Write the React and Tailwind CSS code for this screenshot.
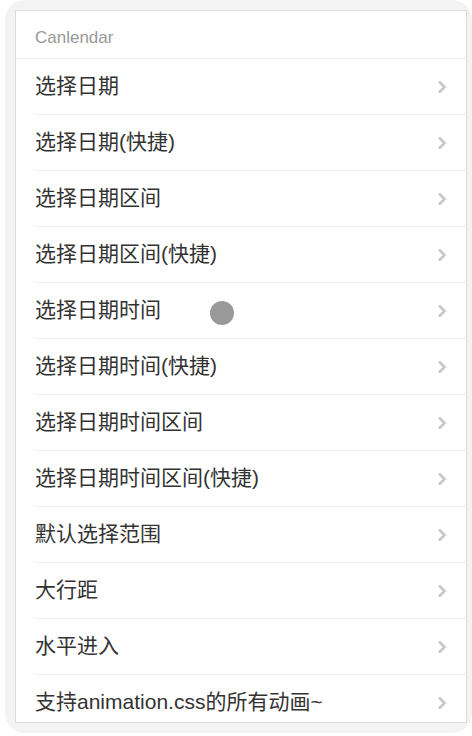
import React from "react";

const items = [
  "选择日期",
  "选择日期(快捷)",
  "选择日期区间",
  "选择日期区间(快捷)",
  "选择日期时间",
  "选择日期时间(快捷)",
  "选择日期时间区间",
  "选择日期时间区间(快捷)",
  "默认选择范围",
  "大行距",
  "水平进入",
  "支持animation.css的所有动画~",
];

function Chevron() {
  return (
    <svg width="10" height="14" viewBox="0 0 10 14" className="shrink-0">
      <path d="M2 1.5 L7.5 7 L2 12.5" fill="none" stroke="#c7c7c7" strokeWidth="2.6" />
    </svg>
  );
}

export default function App() {
  return (
    <div
      className="w-[472px] h-[736px] bg-white overflow-hidden relative"
      style={{ fontFamily: '"Liberation Sans", "Noto Sans CJK SC", Arial, sans-serif' }}
    >
      <div className="ml-[5px] w-[467px] h-[733px] bg-[#f3f3f3] rounded-[20px] pt-[10px] pl-[10px]">
        <div className="w-[452px] h-[713px] bg-white border border-[#dcdcdc] overflow-hidden">
          <div className="h-[48px] flex items-center pl-[19px] border-b border-[#eeeeee] text-[17px] text-[#999999] pt-[7px]">
            Canlendar
          </div>
          {items.map((t, i) => (
            <div key={i} className="pl-[19px]">
              <div className="h-[56px] flex items-center justify-between pr-[19px] border-b border-[#eeeeee] text-[21px] text-[#333333]">
                <span className="leading-[24px] -mt-[2px]">{t}</span>
                <Chevron />
              </div>
            </div>
          ))}
        </div>
      </div>
      <div className="absolute left-[210px] top-[301px] w-[24px] h-[24px] rounded-full bg-[#999999]" />
    </div>
  );
}
